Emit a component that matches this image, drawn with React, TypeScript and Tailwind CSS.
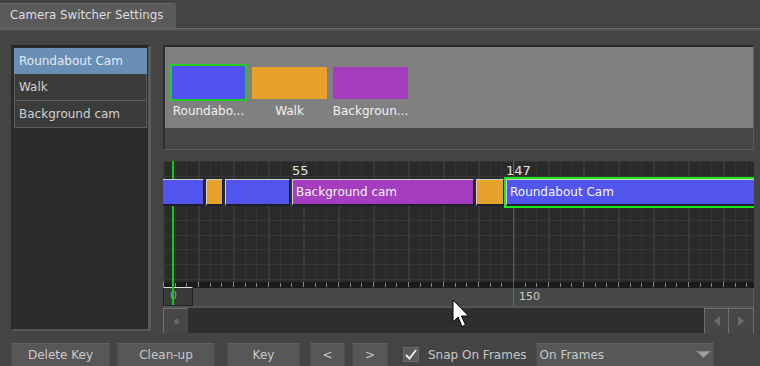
import React from "react"

const cameras = [
  { name: "Roundabout Cam", label: "Roundabo...", swatch: "bg-[#5253ee]", selected: true },
  { name: "Walk", label: "Walk", swatch: "bg-[#e8a22a]", selected: false },
  { name: "Background cam", label: "Backgroun...", swatch: "bg-[#a43cc0]", selected: false },
]

// frame -> px : 2.333 px per frame, frame 0 at the left edge of the track
const segments = [
  { pos: "left-[-4px] w-[45px]", color: "bg-[#5254ee]" },
  { pos: "left-[43px] w-[17px]", color: "bg-[#e7a22b]" },
  { pos: "left-[62px] w-[65px]", color: "bg-[#5254ee]" },
  { pos: "left-[129px] w-[182px]", color: "bg-[#a43dbf]", label: "Background cam", mark: "55" },
  { pos: "left-[313px] w-[28px]", color: "bg-[#e7a22b]" },
  { pos: "left-[343px] w-[252px]", color: "bg-[#5254ee]", label: "Roundabout Cam", mark: "147", selected: true },
]

function TimelineGrid() {
  const cols = Array.from({ length: 51 }, (_, i) => i)
  const rows = Array.from({ length: 9 }, (_, i) => i)
  return (
    <svg className="absolute inset-0" width="591" height="127">
      <rect width="591" height="127" fill="#2a2a2a" />
      {rows.map((r) => (
        <line key={r} x1="0" x2="591" y1={Math.round(r * 14.7) + 0.5} y2={Math.round(r * 14.7) + 0.5} stroke="#373737" />
      ))}
      {cols.map((c) => {
        const x = Math.round(c * 11.667)
        const major = c % 3 === 0
        return (
          <line
            key={c}
            x1={x + (major ? 1 : 0.5)}
            x2={x + (major ? 1 : 0.5)}
            y1="0"
            y2="121"
            stroke={major ? "#393939" : "#343434"}
            strokeWidth={major ? 2 : 1}
          />
        )
      })}
      <rect y="121" width="591" height="6" fill="#1b1b1b" />
      {cols.map((c) => {
        const x = Math.round(c * 11.667) + 0.5
        const major = c % 3 === 0
        return <line key={"t" + c} x1={x} x2={x} y1={major ? 121 : 122} y2="126" stroke="#888888" />
      })}
      <line x1="350.5" x2="350.5" y1="0" y2="127" stroke="#5a5a5a" />
    </svg>
  )
}

function Cursor() {
  return (
    <svg className="absolute left-[452px] top-[299px]" width="20" height="30" viewBox="0 0 20 30">
      <path d="M1 1 L1 23 L6 18 L10 27.5 L13.5 26 L9.5 17 L16.5 17 Z" fill="#ffffff" stroke="#000000" strokeWidth="1" strokeLinejoin="miter" />
    </svg>
  )
}

export default function App() {
  return (
    <div className="relative h-[366px] w-[760px] overflow-hidden bg-[#444444] font-['DejaVu_Sans',sans-serif] text-[12px] text-[#d4d4d4]">
      {/* tab strip */}
      <div className="flex h-[28px] items-end">
        <div className="flex h-[25px] w-[176px] items-center rounded-tr-[3px] border-t border-[#676767] bg-[#5a5a5a] pl-[10px] text-[11.8px] text-[#dedede]">
          Camera Switcher Settings
        </div>
      </div>
      <div className="h-[3px] border-t border-[#6a6a6a] bg-[#545454]" />

      <div className="flex gap-[12px] pl-[11px] pr-[6px] pt-[14px]">
        {/* camera list */}
        <div className="h-[286px] w-[140px] border-b-2 border-l-2 border-r-[3px] border-t-2 border-b-[#585858] border-l-[#2a2a2a] border-r-[#5a5a5a] border-t-[#262626] bg-[#2b2b2b] p-[1px]">
          {cameras.map((c) => (
            <div
              key={c.name}
              className={
                c.selected
                  ? "flex h-[26px] items-center border border-[#6a8fb6] bg-[#6a8fb6] pl-[4px] text-[#e4eaf0]"
                  : "flex h-[27px] items-center border border-[#5c5c5c] border-t-0 bg-[#3b3b3b] pl-[4px] text-[#d2d2d2]"
              }
            >
              {c.name}
            </div>
          ))}
        </div>

        {/* right side */}
        <div className="flex w-[591px] flex-col">
          {/* preview */}
          <div className="flex h-[105px] flex-col border-b border-l-2 border-r border-t-2 border-b-[#5c5c5c] border-l-[#2e2e2e] border-r-[#5c5c5c] border-t-[#2a2a2a]">
            <div className="flex h-[81px] bg-[#808080] pl-[3px] pt-[17px]">
              {cameras.map((c) => (
                <div key={c.name} className="flex w-[81px] flex-col items-center">
                  <div className="flex h-[37px] items-center">
                    <div
                      className={
                        c.selected
                          ? "h-[37px] w-[77px] border-2 border-[#22cc22] " + c.swatch
                          : "h-[32px] w-[75px] " + c.swatch
                      }
                    />
                  </div>
                  <div className="mt-[3px] leading-[14px] text-[#f2f2f2]">{c.label}</div>
                </div>
              ))}
            </div>
            <div className="flex-1 bg-[#464646]" />
          </div>

          {/* timeline */}
          <div className="relative mt-[11px]">
            <div className="relative h-[127px] overflow-hidden">
              <TimelineGrid />
              {segments.map((s, i) => (
                <React.Fragment key={i}>
                  {s.mark && (
                    <div className={"absolute top-[3px] z-[2] text-[13px] leading-[14px] text-[#e2e2e2] " + s.pos.split(" ")[0]}>
                      {s.mark}
                    </div>
                  )}
                  <div
                    className={
                      "absolute top-[18px] z-[2] flex h-[27px] items-center overflow-hidden whitespace-nowrap border-b-2 border-l border-r border-t border-b-[#1d1d2c] border-l-[#cfcfcf] border-r-[#202020] border-t-[#cfcfcf] pl-[3px] text-[#f4f4f4] " +
                      s.pos +
                      " " +
                      s.color +
                      (s.selected ? " ring-2 ring-[#1ee61e]" : "")
                    }
                  >
                    {s.label}
                  </div>
                </React.Fragment>
              ))}
            </div>

            {/* ruler */}
            <div className="relative h-[18px] border-r border-[#5c5c5c] bg-[#474747]">
              <div className="absolute left-0 top-[-1px] flex h-[19px] w-[30px] items-center border border-[#222222] border-t-[#dddddd] bg-[#3a3a3a] pl-[6px] text-[11px] text-[#9a9a9a]">
                0
              </div>
              <div className="absolute left-[350px] top-0 h-[18px] w-px bg-[#6a6a6a]" />
              <div className="absolute left-[356px] top-[1px] text-[11px] leading-[16px] text-[#cdcdcd]">150</div>
            </div>
            <div className="h-[2px] bg-[#545454]" />

            {/* playhead */}
            <div className="absolute left-[9px] top-0 z-[1] h-[144px] w-[2px] bg-[#14c814]" />

            {/* scrollbar */}
            <div className="flex h-[25px]">
              <div className="flex w-[25px] items-center justify-center border-l border-t border-[#707070] bg-[#474747]">
                <div className="h-[5px] w-[5px] rounded-full bg-[#6a6a6a]" />
              </div>
              <div className="flex-1 bg-[#2e2e2e]" />
              <div className="flex w-[25px] items-center justify-center border-l border-r border-t border-[#6e6e6e] bg-[#464646]">
                <svg width="8" height="10" viewBox="0 0 8 10">
                  <polygon points="7,0 7,10 1,5" fill="#6c6c6c" />
                </svg>
              </div>
              <div className="flex w-[25px] items-center justify-center border-r border-t border-[#6e6e6e] bg-[#464646]">
                <svg width="8" height="10" viewBox="0 0 8 10">
                  <polygon points="1,0 1,10 7,5" fill="#6c6c6c" />
                </svg>
              </div>
            </div>
          </div>
        </div>
      </div>

      {/* bottom controls */}
      <div className="mt-[10px] flex h-[24px] items-stretch pl-[11px] text-[#c9c9c9]">
        <button className="w-[99px] border border-[#4e4e4e] border-t-[#626262] bg-[#575757]">Delete Key</button>
        <button className="ml-[7px] w-[98px] border border-[#4e4e4e] border-t-[#626262] bg-[#575757]">Clean-up</button>
        <button className="ml-[12px] w-[73px] border border-[#4e4e4e] border-t-[#626262] bg-[#575757]">Key</button>
        <button className="ml-[10px] w-[35px] border border-[#4e4e4e] border-t-[#626262] bg-[#575757]">&lt;</button>
        <button className="ml-[7px] w-[36px] border border-[#4e4e4e] border-t-[#626262] bg-[#575757]">&gt;</button>
        <div className="ml-[15px] mt-[4px] flex h-[15px] w-[16px] items-center justify-center border border-[#6a6a6a] bg-[#5a5a5a]">
          <svg width="12" height="11" viewBox="0 0 12 11">
            <path d="M1 6 L4.5 9.5 L11 1" fill="none" stroke="#eeeeee" strokeWidth="2" />
          </svg>
        </div>
        <div className="ml-[9px] flex items-center">Snap On Frames</div>
        <div className="ml-[9px] flex w-[178px] items-center justify-between border border-[#4e4e4e] border-t-[#626262] bg-[#575757] pl-[3px] pr-[2px]">
          <span>On Frames</span>
          <svg width="15" height="8" viewBox="0 0 15 8">
            <polygon points="0,0 15,0 7.5,7" fill="#8a8a8a" />
            <polygon points="2,1 13,1 7.5,6" fill="#a0a0a0" />
          </svg>
        </div>
      </div>

      <Cursor />
    </div>
  )
}
